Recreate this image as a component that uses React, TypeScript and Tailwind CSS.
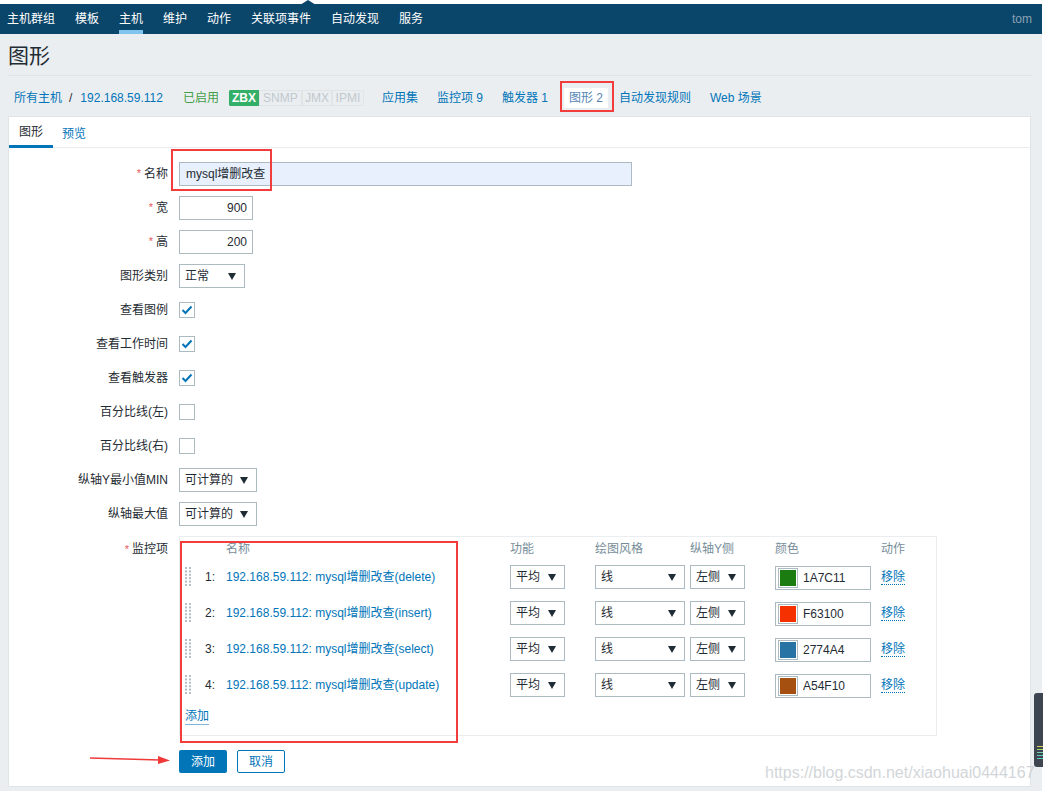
import React from "react"

const font = { fontFamily: '"Liberation Sans", "Noto Sans CJK SC", Arial, sans-serif' }

const navItems = ["主机群组", "模板", "主机", "维护", "动作", "关联项事件", "自动发现", "服务"]

const items = [
  { n: 1, name: "192.168.59.112: mysql增删改查(delete)", color: "#1A7C11", code: "1A7C11" },
  { n: 2, name: "192.168.59.112: mysql增删改查(insert)", color: "#F63100", code: "F63100" },
  { n: 3, name: "192.168.59.112: mysql增删改查(select)", color: "#2774A4", code: "2774A4" },
  { n: 4, name: "192.168.59.112: mysql增删改查(update)", color: "#A54F10", code: "A54F10" },
]

function Arrow() {
  return (
    <svg width="8" height="8" viewBox="0 0 8 8" className="shrink-0">
      <path d="M0 1 L8 1 L4 8 Z" fill="#1f2c33" />
    </svg>
  )
}

function Select({ value, w }: { value: string; w: string }) {
  return (
    <div className={`${w} h-[24px] flex items-center justify-between border border-[#acbbc2] bg-white pl-[5px] pr-[8px] text-[12px] text-[#1f2c33]`}>
      <span>{value}</span>
      <Arrow />
    </div>
  )
}

function Checkbox({ checked }: { checked?: boolean }) {
  return (
    <div className="w-[16px] h-[16px] border border-[#acbbc2] bg-white flex items-center justify-center">
      {checked && (
        <svg width="12" height="10" viewBox="0 0 12 10">
          <path d="M1.5 5 L4.5 8 L10.5 1.5" fill="none" stroke="#0275b8" strokeWidth="2" />
        </svg>
      )}
    </div>
  )
}

function Row({ label, req, children }: { label: string; req?: boolean; children: React.ReactNode }) {
  return (
    <div className="flex gap-[9px] items-center">
      <div className="w-[161px] pr-[2px] text-right text-[12px] text-[#1f2c33]">
        {req && <span className="text-[#e45959] text-[11px] mr-[3px] align-top">*</span>}
        {label}
      </div>
      <div className="h-[24px] flex items-center">{children}</div>
    </div>
  )
}

function DragHandle() {
  const dots = []
  for (let r = 0; r < 6; r++) {
    for (let c = 0; c < 2; c++) {
      dots.push(<rect key={`${r}-${c}`} x={c * 4} y={r * 3.4} width="2" height="2" fill="#b4c0c7" />)
    }
  }
  return (
    <svg width="6" height="20" viewBox="0 0 6 20">
      {dots}
    </svg>
  )
}

export default function App() {
  return (
    <div className="relative w-[1043px] h-[791px] overflow-hidden bg-[#ebeef1] flex" style={font}>
      <div className="w-[1042px] flex flex-col">
        {/* top strip + nav */}
        <div className="h-[4px] bg-white" />
        <div className="h-[30px] bg-[#0a466a] flex items-center justify-between pl-[7px] pr-[10px]">
          <div className="flex gap-[20px] h-full">
            {navItems.map((t) => (
              <div
                key={t}
                className={`h-full flex items-center text-[12px] text-white ${t === "主机" ? "border-b-[4px] border-[#7fc4ee] pt-[4px]" : ""}`}
              >
                {t}
              </div>
            ))}
          </div>
          <span className="text-[12px] text-[#8aa2b3]">tom</span>
        </div>

        {/* title */}
        <div className="mx-[8px] mr-[9px] h-[42px] flex items-center border-b border-[#dfe4e7]">
          <h1 className="text-[21px] text-[#1f2c33] leading-none mt-[2px]">图形</h1>
        </div>

        {/* breadcrumbs */}
        <div className="h-[40px] pt-[3px] flex items-center pl-[14px] text-[12px] text-[#0275b8]">
          <span>所有主机</span>
          <span className="ml-[7px] text-[#1f2c33]">/</span>
          <span className="ml-[8px]">192.168.59.112</span>
          <span className="ml-[20px] text-[#429e47]">已启用</span>
          <div className="ml-[10px] flex h-[16px] text-[12px] leading-[14px] rounded-[2px] overflow-hidden">
            <span className="w-[30px] bg-[#34af67] text-white font-bold text-center border border-[#34af67]">ZBX</span>
            <span className="w-[43px] bg-[#ebeef1] text-[#bfc9ce] text-center border border-[#dfe4e7]">SNMP</span>
            <span className="w-[30px] bg-[#ebeef1] text-[#bfc9ce] text-center border border-[#dfe4e7]">JMX</span>
            <span className="w-[32px] bg-[#ebeef1] text-[#bfc9ce] text-center border border-[#dfe4e7]">IPMI</span>
          </div>
          <span className="ml-[18px]">应用集</span>
          <span className="ml-[19px]">监控项 9</span>
          <span className="ml-[19px]">触发器 1</span>
          <span className="ml-[16px] h-[20px] leading-[20px] bg-white px-[5px] text-[#5585b4]">图形 2</span>
          <span className="ml-[11px]">自动发现规则</span>
          <span className="ml-[19px]">Web 场景</span>
        </div>

        {/* panel */}
        <div className="ml-[8px] w-[1023px] h-[671px] bg-white border border-[#dfe4e7] flex flex-col">
          <div className="flex h-[31px] border-b border-[#ebeef1] text-[12px]">
            <div className="px-[10px] h-[31px] flex items-center border-b-[3px] border-[#0275b8] text-[#1f2c33] pt-[2px]">图形</div>
            <div className="px-[9px] h-[31px] flex items-center text-[#0275b8] pt-[2px]">预览</div>
          </div>

          <div className="pt-[14px] flex flex-col gap-[10px]">
            <Row label="名称" req>
              <div className="w-[453px] h-[24px] border border-[#acbbc2] bg-[#e8f0fe] pl-[6px] flex items-center text-[12px] text-[#1f2c33]">
                mysql增删改查
              </div>
            </Row>
            <Row label="宽" req>
              <div className="w-[74px] h-[24px] border border-[#acbbc2] bg-white pr-[5px] flex items-center justify-end text-[12px] text-[#1f2c33]">900</div>
            </Row>
            <Row label="高" req>
              <div className="w-[74px] h-[24px] border border-[#acbbc2] bg-white pr-[5px] flex items-center justify-end text-[12px] text-[#1f2c33]">200</div>
            </Row>
            <Row label="图形类别">
              <Select value="正常" w="w-[66px]" />
            </Row>
            <Row label="查看图例">
              <Checkbox checked />
            </Row>
            <Row label="查看工作时间">
              <Checkbox checked />
            </Row>
            <Row label="查看触发器">
              <Checkbox checked />
            </Row>
            <Row label="百分比线(左)">
              <Checkbox />
            </Row>
            <Row label="百分比线(右)">
              <Checkbox />
            </Row>
            <Row label="纵轴Y最小值MIN">
              <Select value="可计算的" w="w-[78px]" />
            </Row>
            <Row label="纵轴最大值">
              <Select value="可计算的" w="w-[78px]" />
            </Row>

            {/* items table */}
            <div className="flex items-start gap-[9px]">
              <div className="w-[161px] pr-[2px] text-right text-[12px] text-[#1f2c33] h-[24px] leading-[24px] mt-[1px]">
                <span className="text-[#e45959] text-[11px] mr-[3px] align-top">*</span>
                监控项
              </div>
              <div className="w-[758px] border border-[#ebeef1] flex flex-col pb-[10px] text-[12px]">
                <div className="grid grid-cols-[20px_26px_284px_85px_95px_85px_106px_1fr] h-[24px] items-center text-[#768d99]">
                  <span />
                  <span />
                  <span>名称</span>
                  <span>功能</span>
                  <span>绘图风格</span>
                  <span>纵轴Y侧</span>
                  <span>颜色</span>
                  <span>动作</span>
                </div>
                <div className="mt-[2px] flex flex-col gap-[12px]">
                  {items.map((it) => (
                    <div key={it.n} className="grid grid-cols-[20px_26px_284px_85px_95px_85px_106px_1fr] h-[24px] items-center">
                      <div className="pl-[5px] flex items-center">
                        <DragHandle />
                      </div>
                      <span className="pl-[5px] text-[#1f2c33]">{it.n}:</span>
                      <span className="text-[#0275b8] whitespace-nowrap">{it.name}</span>
                      <Select value="平均" w="w-[55px]" />
                      <Select value="线" w="w-[90px]" />
                      <Select value="左侧" w="w-[55px]" />
                      <div className="w-[96px] h-[24px] mt-[3px] border border-[#acbbc2] bg-white flex items-center pl-[2px] gap-[5px] text-[#1f2c33]">
                        <div className="w-[20px] h-[20px] border border-[#acbbc2] p-[1px] bg-white">
                          <div className="w-full h-full" style={{ backgroundColor: it.color }} />
                        </div>
                        <span>{it.code}</span>
                      </div>
                      <span className="text-[#0275b8] border-b border-dotted border-[#0275b8] justify-self-start leading-[14px] mt-[2px]">移除</span>
                    </div>
                  ))}
                </div>
                <div className="mt-[12px] ml-[5px]">
                  <span className="text-[#0275b8] border-b border-[#7fb6da] leading-[15px] inline-block">添加</span>
                </div>
              </div>
            </div>
          </div>

          <div className="ml-[170px] mt-[14px] flex gap-[10px] text-[12px]">
            <button className="w-[48px] h-[23px] bg-[#0275b8] text-white rounded-[2px]">添加</button>
            <button className="w-[48px] h-[23px] border border-[#0275b8] text-[#0275b8] bg-white rounded-[2px]">取消</button>
          </div>
        </div>
      </div>
      <div className="w-[1px] bg-white" />

      {/* nav notch */}
      <svg className="absolute left-[300px] top-0" width="16" height="5" viewBox="0 0 16 5">
        <path d="M0 5 L8 0 L16 5 Z" fill="#0a466a" />
      </svg>

      {/* screenshot annotations */}
      <div className="absolute left-[171px] top-[149px] w-[101px] h-[42px] border-2 border-[#f23d3d]" />
      <div className="absolute left-[560px] top-[81px] w-[54px] h-[31px] border-2 border-[#f23d3d]" />
      <div className="absolute left-[180px] top-[541px] w-[278px] h-[202px] border-2 border-[#f23d3d]" />
      <svg className="absolute left-[88px] top-[752px]" width="86" height="14" viewBox="0 0 86 14">
        <path d="M2 6 L72 8" stroke="#f03a3a" strokeWidth="1.5" />
        <path d="M70 4 L82 8.5 L70 12 Z" fill="#f03a3a" />
      </svg>

      {/* watermark */}
      <div className="absolute left-[765px] top-[761px] text-[16px] text-[#c8cdd1] opacity-80 whitespace-nowrap">
        https://blog.csdn.net/xiaohuai0444167
      </div>

      {/* desktop widget at edge */}
      <div className="absolute left-[1034px] top-[693px] w-[9px] h-[74px] bg-[#3d4650] rounded-l-[3px] flex flex-col justify-end gap-[2px] pb-[8px] pl-[3px]">
        <div className="h-[1px] w-[6px] bg-[#d7d35a]" />
        <div className="h-[1px] w-[6px] bg-[#a8d46a]" />
        <div className="h-[1px] w-[6px] bg-[#6fd0a0]" />
        <div className="h-[1px] w-[6px] bg-[#5fc8c0]" />
        <div className="h-[1px] w-[6px] bg-[#5fc8c0]" />
      </div>
    </div>
  )
}
